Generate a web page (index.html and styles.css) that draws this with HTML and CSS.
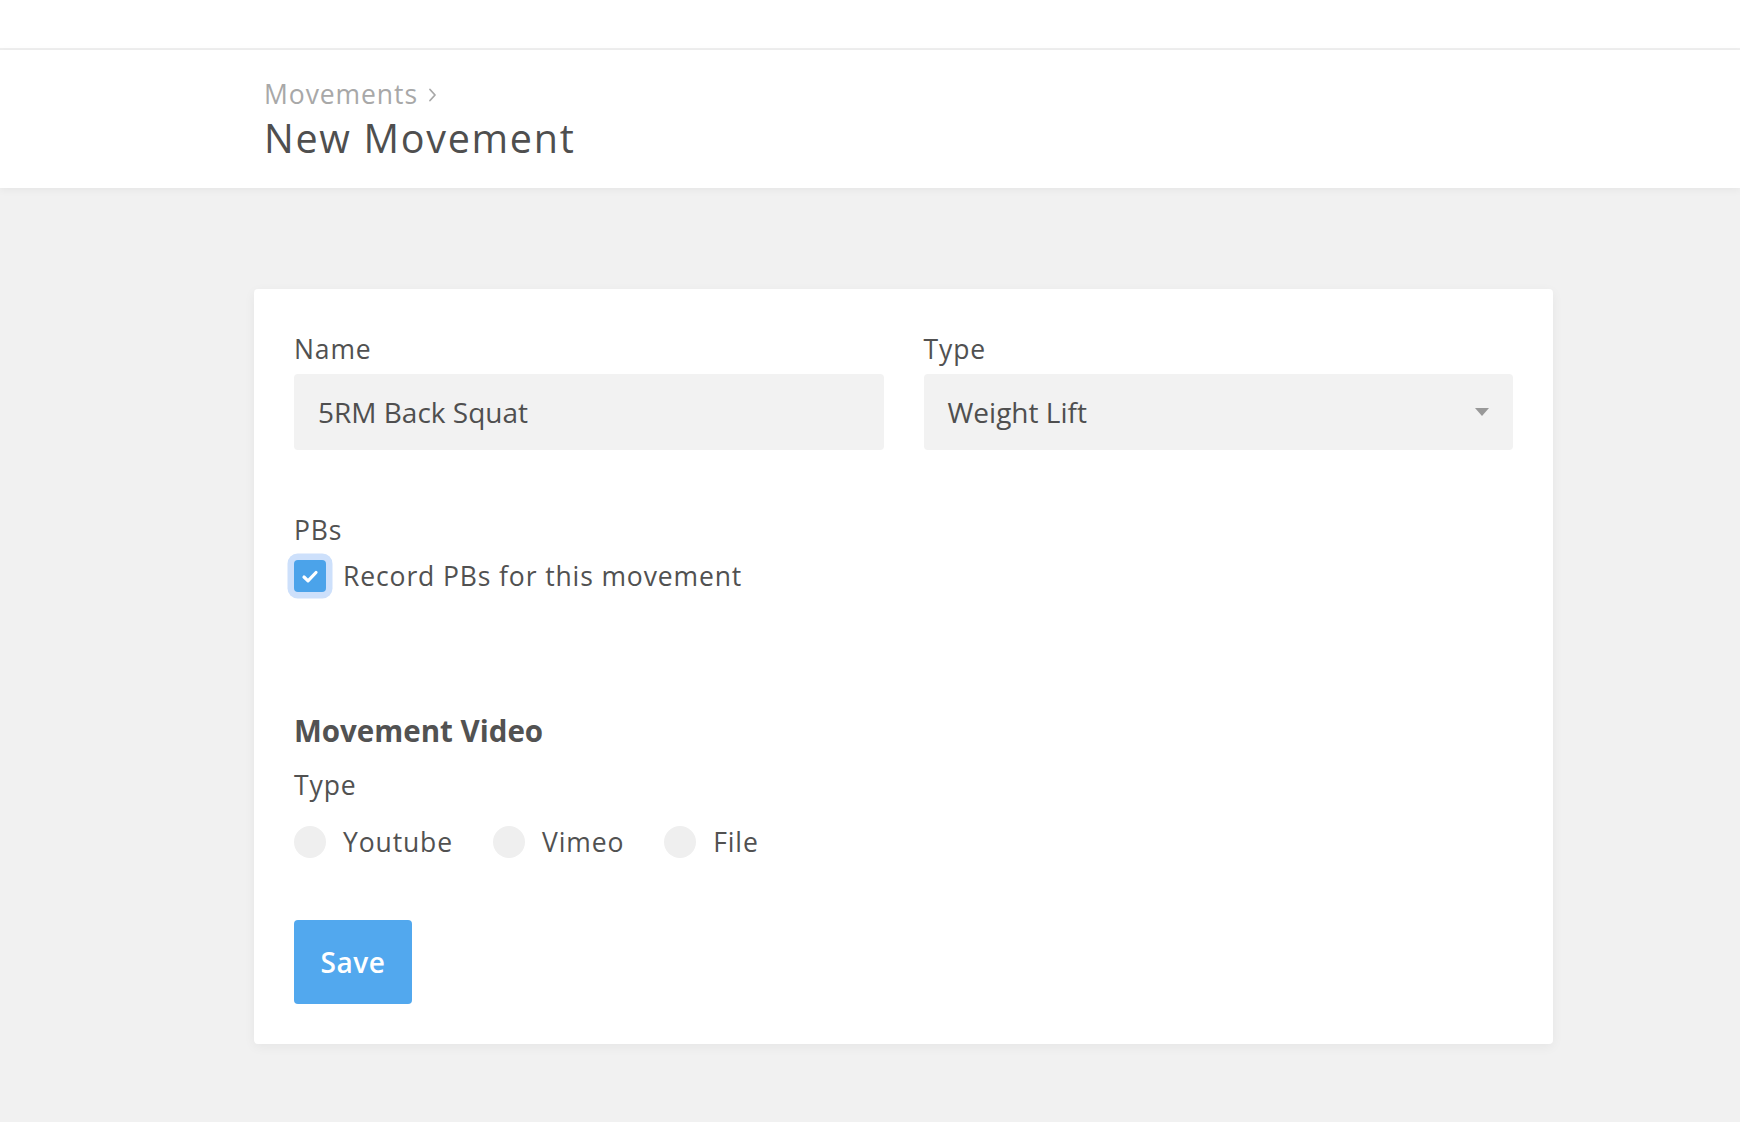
FILE: index.html
```html
<!DOCTYPE html>
<html lang="en">
<head>
<meta charset="utf-8">
<title>New Movement</title>
<link rel="stylesheet" href="styles.css">
</head>
<body>
<div class="topbar"></div>
<header class="page-header">
  <div class="crumbs">
    <span>Movements</span>
    <svg class="chev" width="9" height="14" viewBox="0 0 9 14"><polyline points="2,1.5 7,7 2,12.5" fill="none" stroke="#a8a8a8" stroke-width="1.8" stroke-linecap="round" stroke-linejoin="round"/></svg>
  </div>
  <h1 class="title">New Movement</h1>
</header>
<main class="main">
  <section class="card">
    <div class="row">
      <div class="field">
        <div class="label">Name</div>
        <input class="input" type="text" value="5RM Back Squat">
      </div>
      <div class="field">
        <div class="label">Type</div>
        <div class="input select"><span>Weight Lift</span><span class="caret"></span></div>
      </div>
    </div>
    <div class="pbs">
      <div class="label">PBs</div>
      <div class="check">
        <span class="box">
          <svg width="32" height="32" viewBox="0 0 32 32"><polyline points="10,17 14,20.8 22,12.5" fill="none" stroke="#fff" stroke-width="3.2" stroke-linecap="round" stroke-linejoin="round"/></svg>
        </span>
        <span class="check-text">Record PBs for this movement</span>
      </div>
    </div>
    <h2 class="section-title">Movement Video</h2>
    <div class="label type-label">Type</div>
    <div class="radios">
      <div class="radio"><span class="dot"></span><span>Youtube</span></div>
      <div class="radio"><span class="dot"></span><span>Vimeo</span></div>
      <div class="radio"><span class="dot"></span><span>File</span></div>
    </div>
    <button class="save" type="button">Save</button>
  </section>
</main>
</body>
</html>
```
FILE: styles.css
```css
* { box-sizing: border-box; }
html, body { margin: 0; padding: 0; }
body {
  background: #f1f1f1;
  font-family: "Open Sans", "Noto Sans", sans-serif;
  color: #515151;
  letter-spacing: 0.055em;
  min-height: 100vh;
}
.topbar {
  height: 50px;
  background: #fff;
  border-bottom: 2px solid #efefef;
}
.page-header {
  background: #fff;
  padding: 26px 0 24px 264px;
  box-shadow: 0 2px 8px rgba(0,0,0,0.05);
  position: relative;
}
.crumbs {
  display: flex;
  align-items: center;
  gap: 10px;
  font-size: 26.5px;
  line-height: 36px;
  letter-spacing: 0.035em;
  color: #a8a8a8;
}
.chev { margin-top: 2px; }
.title {
  margin: 0;
  font-size: 39.5px;
  line-height: 52px;
  font-weight: 400;
  letter-spacing: 0.043em;
  color: #4f4f4f;
}
.main {
  padding: 101px 0 78px 254px;
}
.card {
  width: 1299px;
  background: #fff;
  border-radius: 4px;
  box-shadow: 0 3px 12px rgba(0,0,0,0.05);
  padding: 42px 40px 40px;
}
.row {
  display: grid;
  grid-template-columns: 1fr 1fr;
  gap: 40px;
}
.label {
  font-size: 26.5px;
  line-height: 36px;
  color: #515151;
  margin-bottom: 7px;
}
.input {
  display: block;
  width: 100%;
  height: 76px;
  border: 0;
  border-radius: 4px;
  background: #f2f2f2;
  padding: 0 24px;
  font-family: inherit;
  font-size: 28px;
  letter-spacing: 0;
  color: #4f4f4f;
  outline: none;
}
.select {
  display: flex;
  align-items: center;
  justify-content: space-between;
}
.caret {
  width: 0;
  height: 0;
  border-left: 7.5px solid transparent;
  border-right: 7.5px solid transparent;
  border-top: 8px solid #999;
}
.pbs { margin-top: 62px; }
.pbs .label { margin-bottom: 0; }
.check {
  margin-top: 12px;
  display: flex;
  align-items: center;
  gap: 17px;
  height: 32px;
  font-size: 26.5px;
  line-height: 32px;
}
.box {
  width: 32px;
  height: 32px;
  border-radius: 4px;
  background: #4ba3ea;
  box-shadow: 0 0 0 6.5px #cde0fb;
  display: flex;
  align-items: center;
  justify-content: center;
}
.section-title {
  margin: 119px 0 0;
  font-size: 29.5px;
  line-height: 40px;
  font-weight: 700;
  letter-spacing: 0;
  color: #525252;
}
.type-label { margin: 16px 0 0; }
.radios {
  margin-top: 23px;
  display: flex;
  gap: 40px;
}
.radio {
  display: flex;
  align-items: center;
  gap: 17px;
  height: 32px;
  font-size: 26.5px;
  line-height: 32px;
}
.dot {
  width: 32px;
  height: 32px;
  border-radius: 50%;
  background: #efefef;
}
.save {
  display: block;
  margin-top: 62px;
  width: 118px;
  height: 84px;
  border: 0;
  border-radius: 4px;
  background: #52a8ee;
  color: #fff;
  font-family: inherit;
  font-size: 28px;
  font-weight: 600;
  letter-spacing: 0.02em;
  padding: 0;
}
```
